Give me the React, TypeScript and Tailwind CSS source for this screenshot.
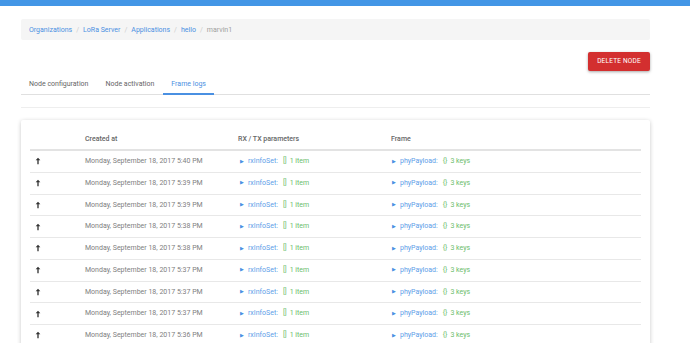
import React from 'react';

const times = ['5:40', '5:39', '5:39', '5:38', '5:38', '5:37', '5:37', '5:37', '5:36'];

const ArrowUp: React.FC = () => (
  <svg viewBox="0 0 24 24" className="w-[8px] h-[8px]" fill="#333">
    <path d="M12 2 5 10h5v12h4V10h5z" />
  </svg>
);

const Crumb: React.FC<{ label: string; last?: boolean }> = ({ label, last }) => (
  <>
    <span className={last ? 'text-[#a0a0a0]' : 'text-[#4a90e2]'}>{label}</span>
    {!last && <span className="text-[#ccc] px-[4px]">/</span>}
  </>
);

const App: React.FC = () => {
  return (
    <div className="w-[690px] h-[343px] overflow-hidden bg-white" style={{ fontFamily: 'Roboto, "Liberation Sans", sans-serif' }}>
      {/* top bar */}
      <div className="h-[6px] bg-[#4396e6]" />

      <div className="ml-[21px] w-[629px]">
        {/* breadcrumbs */}
        <div className="mt-[13px] h-[21px] bg-[#f5f5f5] rounded-[2px] flex items-center pl-[8px] pt-[1px] text-[7px]">
          <Crumb label="Organizations" />
          <Crumb label="LoRa Server" />
          <Crumb label="Applications" />
          <Crumb label="hello" />
          <Crumb label="marvin1" last />
        </div>

        {/* actions */}
        <div className="flex justify-end mt-[12px]">
          <button className="h-[19px] w-[62px] bg-[#d32f2f] text-white text-[6.5px] tracking-[0.2px] rounded-[2px] shadow-[0_1px_3px_rgba(0,0,0,0.35)]">
            DELETE NODE
          </button>
        </div>

        {/* tabs */}
        <div className="mt-[4px] flex border-b border-[#e0e0e0] text-[7px] h-[20px]">
          <div className="px-[8px] flex items-center text-[#666]">Node configuration</div>
          <div className="px-[8px] ml-[1px] flex items-center text-[#666]">Node activation</div>
          <div className="px-[8px] ml-[1px] flex items-center text-[#4a90e2] border-b-2 border-[#4a90e2] -mb-[1px] pt-[1px]">Frame logs</div>
        </div>
        <div className="mt-[12px] border-t border-[#eee]" />

        {/* card */}
        <div className="mt-[12px] bg-white rounded-[2px] shadow-[0_1px_4px_rgba(0,0,0,0.22)] px-[9px] pt-[10px] h-[240px]">
          <div className="grid grid-cols-[55px_153px_153px_1fr] h-[21px] items-center text-[7px] font-medium text-[#666] border-b-2 border-[#e3e3e3]">
            <div />
            <div>Created at</div>
            <div>RX / TX parameters</div>
            <div>Frame</div>
          </div>
          {times.map((t, i) => (
            <div
              key={i}
              className="grid grid-cols-[55px_153px_153px_1fr] h-[21.75px] items-center text-[7px] border-b border-[#e8e8e8]"
            >
              <div className="pl-[4px] flex">
                <ArrowUp />
              </div>
              <div className="text-[#808080]">Monday, September 18, 2017 {t} PM</div>
              <div className="flex items-center pl-[2px]">
                <span className="text-[#4a90e2] text-[5px] mr-[4px]">▶</span>
                <span className="text-[#5c9ee8]">rxInfoSet:</span>
                <span className="text-[#6cbd6c] ml-[5px]">[]</span>
                <span className="text-[#6cbd6c] ml-[3px]">1 item</span>
              </div>
              <div className="flex items-center pl-[1px]">
                <span className="text-[#4a90e2] text-[5px] mr-[4px]">▶</span>
                <span className="text-[#5c9ee8]">phyPayload:</span>
                <span className="text-[#6cbd6c] ml-[5px]">{'{}'}</span>
                <span className="text-[#6cbd6c] ml-[3px]">3 keys</span>
              </div>
            </div>
          ))}
        </div>
      </div>
    </div>
  );
};

export default App;
